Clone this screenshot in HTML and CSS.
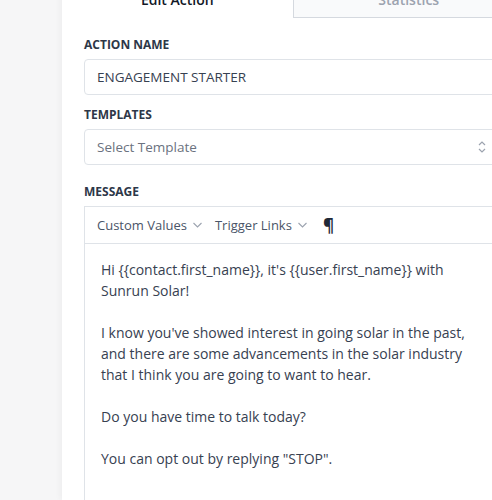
FILE: index.html
```html
<!DOCTYPE html>
<html lang="en">
<head>
    <meta charset="UTF-8">
    <meta name="viewport" content="width=device-width, initial-scale=1.0">
    <title>Edit Action</title>
    <link rel="stylesheet" href="styles.css">
</head>
<body>
    <div class="panel">
        <div class="tabs">
            <div class="tab active">Edit Action</div>
            <div class="tab">Statistics</div>
        </div>

        <div class="form">
            <div class="field">
                <label>Action Name</label>
                <div class="input">ENGAGEMENT STARTER</div>
            </div>

            <div class="field field-select">
                <label>Templates</label>
                <div class="input select">
                    <span class="placeholder">Select Template</span>
                    <svg class="updown" width="10" height="14" viewBox="0 0 10 14">
                        <polyline points="2,5 5,2 8,5" fill="none" stroke="#9ca3af" stroke-width="1.2"/>
                        <polyline points="2,9 5,12 8,9" fill="none" stroke="#9ca3af" stroke-width="1.2"/>
                    </svg>
                </div>
            </div>

            <div class="field">
                <label>Message</label>
                <div class="editor">
                    <div class="toolbar">
                        <span class="tool">Custom Values
                            <svg width="9" height="6" viewBox="0 0 9 6"><polyline points="0.5,1 4.5,5 8.5,1" fill="none" stroke="#9ca3af" stroke-width="1.1"/></svg>
                        </span>
                        <span class="tool">Trigger Links
                            <svg width="9" height="6" viewBox="0 0 9 6"><polyline points="0.5,1 4.5,5 8.5,1" fill="none" stroke="#9ca3af" stroke-width="1.1"/></svg>
                        </span>
                        <span class="tool pilcrow">¶</span>
                    </div>
                    <div class="body">
                        <p>Hi {{contact.first_name}}, it's {{user.first_name}} with<br>Sunrun Solar!</p>
                        <p>I know you've showed interest in going solar in the past,<br>and there are some advancements in the solar industry<br>that I think you are going to want to hear.</p>
                        <p>Do you have time to talk today?</p>
                        <p>You can opt out by replying "STOP".</p>
                    </div>
                </div>
            </div>
        </div>
    </div>
</body>
</html>
```

FILE: styles.css
```css
body {
    margin: 0;
    background: #f6f6f7;
    font-family: 'Open Sans', sans-serif;
    color: #374151;
    overflow: hidden;
    height: 500px;
}

.panel {
    margin-left: 62px;
    margin-top: -19px;
    width: 462px;
    height: 519px;
    background: #ffffff;
    box-shadow: -2px 0 6px rgba(0, 0, 0, 0.04);
}

/* Tabs */
.tabs {
    display: flex;
}

.tab {
    flex: 1;
    height: 36px;
    display: flex;
    align-items: center;
    justify-content: center;
    font-size: 14px;
    font-weight: 600;
    color: #9ca3af;
    background: #f9fafb;
    border-left: 1px solid #d5d9df;
    border-bottom: 1px solid #d5d9df;
}

.tab.active {
    background: #ffffff;
    color: #111827;
    border: none;
}

/* Form */
.form {
    padding: 0 28px 0 22px;
}

.field {
    margin-bottom: 12px;
}

.field:first-child {
    padding-top: 19px;
}

.field-select {
    margin-bottom: 19px;
}

label {
    display: block;
    font-size: 12px;
    line-height: 16px;
    font-weight: 700;
    text-transform: uppercase;
    color: #2d3748;
    margin-bottom: 6px;
}

.input {
    height: 34px;
    border: 1px solid #dfe3e8;
    border-radius: 4px;
    padding: 0 12px;
    display: flex;
    align-items: center;
    font-size: 13.5px;
    color: #374151;
}

.select {
    justify-content: space-between;
    padding-right: 8px;
}

.placeholder {
    color: #6b7280;
}

/* Message editor */
.editor {
    border: 1px solid #dfe3e8;
    border-right: none;
    margin-right: -40px;
    height: 320px;
}

.toolbar {
    height: 36px;
    border-bottom: 1px solid #dfe3e8;
    display: flex;
    align-items: center;
    padding-left: 12px;
    gap: 13px;
}

.tool {
    display: flex;
    align-items: center;
    gap: 6px;
    font-size: 13px;
    color: #4a5568;
}

.pilcrow {
    font-weight: 700;
    font-size: 17px;
    color: #1f2937;
    margin-left: 3px;
}

.body {
    padding: 15px 16px;
    font-size: 14px;
    line-height: 21px;
    color: #374151;
    white-space: nowrap;
}

.body p {
    margin: 0 0 21px;
}
```
